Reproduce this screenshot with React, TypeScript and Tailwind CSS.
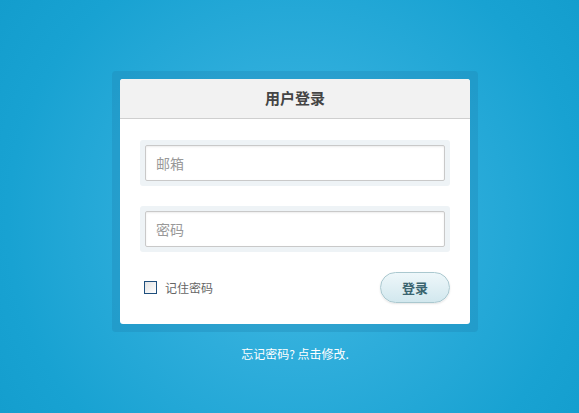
import React, { useState } from 'react';

const font = { fontFamily: '"Noto Sans CJK SC", "Liberation Sans", sans-serif' };

const App: React.FC = () => {
  const [remember, setRemember] = useState(false);

  return (
    <div
      className="w-[579px] h-[413px] overflow-hidden bg-[radial-gradient(circle_at_295px_220px,#45bbe2_0%,#2eaddb_40%,#18a2d2_78%,#139dcd_100%)]"
      style={font}
    >
      <div className="pt-[71px] pl-[112px]">
        {/* Frame */}
        <div className="w-[366px] p-[8px] rounded-[4px] bg-[rgba(30,130,175,0.3)]">
          <div className="bg-white rounded-[3px] overflow-hidden h-[245px]">
            {/* Header */}
            <div className="h-[40px] bg-[#f2f2f2] border-b border-[#cfcfcf] flex items-center justify-center">
              <span className="text-[15px] font-bold text-[#444]">用户登录</span>
            </div>

            {/* Fields */}
            <div className="px-[20px] pt-[21px]">
              <div className="p-[5px] bg-[#eef3f6] rounded-[3px]">
                <input
                  type="text"
                  placeholder="邮箱"
                  className="w-full h-[36px] px-[10px] text-[14px] border border-[#c9c9c9] rounded-[2px] bg-white outline-none shadow-[inset_0_1px_2px_rgba(0,0,0,0.08)] placeholder:text-[#999]"
                  style={font}
                />
              </div>
              <div className="mt-[20px] p-[5px] bg-[#eef3f6] rounded-[3px]">
                <input
                  type="password"
                  placeholder="密码"
                  className="w-full h-[36px] px-[10px] text-[14px] border border-[#c9c9c9] rounded-[2px] bg-white outline-none shadow-[inset_0_1px_2px_rgba(0,0,0,0.08)] placeholder:text-[#999]"
                  style={font}
                />
              </div>

              {/* Remember + submit */}
              <div className="mt-[20px] flex items-center justify-between pl-[4px]">
                <label className="flex items-center gap-[8px] cursor-pointer">
                  <span
                    onClick={() => setRemember(!remember)}
                    className="w-[13px] h-[13px] border border-[#1f4f7d] bg-gradient-to-br from-[#e3e3e3] to-white flex items-center justify-center text-[10px] leading-none text-[#1f4f7d]"
                  >
                    {remember ? '✓' : ''}
                  </span>
                  <span className="text-[12px] text-[#666]">记住密码</span>
                </label>
                <button
                  className="w-[70px] h-[31px] rounded-full border border-[#aac8cf] bg-gradient-to-b from-[#eef7fa] to-[#d2e8ee] text-[13px] font-bold text-[#3b6570] shadow-[0_1px_2px_rgba(0,0,0,0.1)]"
                  style={font}
                >
                  登录
                </button>
              </div>
            </div>
          </div>
        </div>
      </div>

      {/* Footer link */}
      <div className="mt-[13px] w-[590px] text-center text-[12px] text-white">
        忘记密码? 点击修改.
      </div>
    </div>
  );
};

export default App;
